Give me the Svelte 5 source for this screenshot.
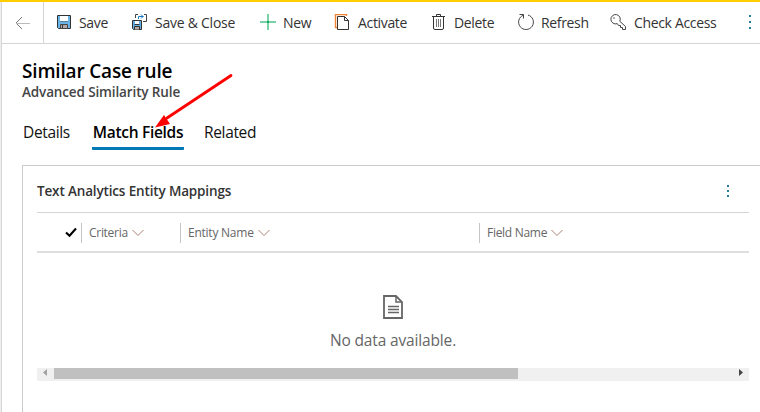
<script>
  const commands = [
    { id: 'save', label: 'Save' },
    { id: 'close', label: 'Save & Close' },
    { id: 'new', label: 'New' },
    { id: 'activate', label: 'Activate' },
    { id: 'delete', label: 'Delete' },
    { id: 'refresh', label: 'Refresh' },
    { id: 'access', label: 'Check Access' }
  ];
  const columns = [
    { id: 'criteria', label: 'Criteria' },
    { id: 'entity', label: 'Entity Name' },
    { id: 'field', label: 'Field Name' }
  ];
</script>

<div class="app">
  <header>
    <button class="back" aria-label="Back">
      <svg width="16" height="14" viewBox="0 0 16 14"><path d="M7 1 1 7l6 6" stroke="#777"/><path d="M1 7.5h14" stroke="#bbb"/></svg>
    </button>
    <nav>
      {#each commands as c}
        <button class="command {c.id}">
          <svg width="16" height="17" viewBox="0 0 16 17">
            {#if c.id === 'save'}
              <path d="M1.5 1.5h13v13h-12l-1-1z" fill="#69b5e8" stroke="#333"/>
              <path d="M4 2h8v5H4z" fill="#fff"/><path d="M4 7.5h8" stroke="#557f99"/><path d="M4.5 10.5h7v4h-7z" fill="#b6aaa6" stroke="#444"/><path d="M6.5 11v3" stroke="#333"/>
            {:else if c.id === 'close'}
              <path d="M.5 6.5h9v9h-8l-1-1z" fill="#62aee2" stroke="#333"/>
              <path d="M3 7h4v3H3z" fill="#fff"/><path d="M2.5 10.5h5M2.5 15.5v-3h5v3" fill="#b8aaa5" stroke="#333"/>
              <path d="M6 .5H3.5V4M12 .5h2.5v7H11" stroke="#444"/><path d="M6.5 5V2.5h5M9 .5l2 2-2 2" stroke="#167bc1"/>
            {:else if c.id === 'new'}
              <path d="M8 0v16M0 8h16" stroke="#77d2a6" stroke-width="2"/><path d="M7 7h2v2H7z" fill="#19a867"/>
            {:else if c.id === 'activate'}
              <path d="M3 13.5H1.5V.5h11V2" stroke="#f58334" stroke-width="1.4"/><path d="M3.5 2.5h7l4 4v9h-11z" fill="#fff" stroke="#333"/><path d="M10.5 2.5v4h4" stroke="#333"/>
            {:else if c.id === 'delete'}
              <path d="M1 2.5h13M5.5 2V.5h4V2M2.5 3v11q0 1.5 1.5 1.5h7q1.5 0 1.5-1.5V3" stroke="#333"/><path d="M5.5 5v8M7.5 5v8M9.5 5v8" stroke="#777"/>
            {:else if c.id === 'refresh'}
              <path d="M10 1A7.4 7.4 0 1 1 5.4 1.2M1.5.5h4v4" stroke="#444"/>
            {:else}
              <path d="M9.8 7.3l5.7 5.2v3h-3v-2h-2v-2h-2L7.3 9.6A4.7 4.7 0 1 1 9.8 7.3z" stroke="#444"/><circle cx="4" cy="4" r=".8" fill="#444"/>
            {/if}
          </svg>
          <span>{c.label}</span>
        </button>
      {/each}
    </nav>
    <svg class="more" width="4" height="16" viewBox="0 0 4 16"><path d="M1 1h2v2H1zM1 7h2v2H1zM1 13h2v2H1z" fill="#277c9d"/></svg>
  </header>

  <main>
    <h1>Similar Case rule</h1>
    <p class="subtitle">Advanced Similarity Rule</p>
    <div class="tabs">
      <button class="tab details"><span>Details</span></button>
      <button class="tab active"><span>Match Fields</span></button>
      <button class="tab"><span>Related</span></button>
    </div>
    <section>
      <div class="heading">
        <h2>Text Analytics Entity Mappings</h2>
        <svg width="4" height="14" viewBox="0 0 4 14"><path d="M1 1h2v2H1zM1 6h2v2H1zM1 11h2v2H1z" fill="#277c9d"/></svg>
      </div>
      <div class="columns">
        <div class="select"><svg width="12" height="11" viewBox="0 0 12 11"><path d="m1 5.5 3.5 3.3L11 1.5" stroke="#000" stroke-width="2.1"/></svg></div>
        {#each columns as col}
          <div class="column {col.id}">
            <span>{col.label}</span>
            <svg width="12" height="8" viewBox="0 0 12 8"><path d="m.5 1 5.5 5.5L11.5 1" stroke="#ac8275"/></svg>
          </div>
        {/each}
      </div>
      <div class="empty">
        <svg width="20" height="24" viewBox="0 0 20 24"><path d="M1 1h12l6 6v16H1z" stroke="#666" stroke-width="1.8"/><path d="M13 1v6h6M5 11.5h11M5 14.5h11M5 17.5h11" stroke="#666" stroke-width="1.5"/></svg>
        <p>No data available.</p>
      </div>
      <div class="scrollbar">
        <svg width="17" height="13" viewBox="0 0 17 13"><path d="M10 1v7L6 4.5z" fill="#a3a3a3"/></svg>
        <div class="thumb"></div>
        <svg width="17" height="13" viewBox="0 0 17 13"><path d="M7 1v7l4-3.5z" fill="#444"/></svg>
      </div>
    </section>
  </main>
  <svg class="pointer" width="84" height="60" viewBox="0 0 84 60"><path d="M79 3.5 15 46" stroke="#f00" stroke-width="2.8" stroke-linecap="round"/><path d="m3 55.5 9-12.5 6 9z" fill="#f00"/></svg>
</div>

<style>
  * { box-sizing: border-box; }
  .app { position: relative; width: 760px; height: 412px; overflow: hidden; background: #fff; border-top: 2px solid #ffce00; color: #333; font-family: "Open Sans", "Noto Sans", sans-serif; }
  .app::before { content: ""; position: absolute; left: 0; top: 0; width: 2px; height: 410px; background: linear-gradient(90deg, #efefef 50%, #d5d5d5 50%); }
  button { border: 0; margin: 0; padding: 0; background: transparent; font-family: inherit; color: inherit; }
  svg { display: block; fill: none; flex: none; }
  span, h1, h2, p { white-space: nowrap; }
  header { height: 42px; display: flex; align-items: center; border-bottom: 1px solid #d5d5d5; }
  .back { width: 44px; height: 41px; padding: 1px 0 0 15px; border-right: 1px solid #d5d5d5; }
  nav { width: 704px; display: flex; padding-left: 12px; }
  .command { display: flex; flex: none; align-items: center; gap: 7px; height: 41px; font-size: 14px; letter-spacing: -.34px; }
  .save { width: 76px; }
  .close { width: 128px; letter-spacing: -.25px; }
  .new { width: 74px; }
  .activate { width: 97px; gap: 8px; }
  .delete { width: 87px; }
  .refresh { width: 92px; }
  .access { gap: 8px; }
  .more { margin-top: -1px; }
  main { padding-left: 22px; }
  h1 { margin: 0; padding-top: 14px; font-size: 19px; line-height: 26px; font-weight: 600; color: #000; letter-spacing: -.18px; }
  .subtitle { margin: 0; font-size: 13.5px; line-height: 17px; font-weight: 600; color: #444; letter-spacing: -.13px; }
  .tabs { display: flex; height: 64px; padding-top: 19px; gap: 20px; }
  .tab { height: 30px; border-bottom: 3px solid transparent; font-size: 15.5px; line-height: 23px; color: #111; letter-spacing: -.34px; padding: 1px 0 3px; }
  .tab span { display: block; }
  .details { width: 50px; padding-left: 1px; text-align: left; }
  .tab.active { width: 92px; border-color: #0078b6; border-radius: 1px; font-weight: 600; letter-spacing: -.3px; font-size: 15.5px; color: #000; }
  section { height: 248px; border: 1px solid #ccc; border-right: 0; border-bottom: 0; padding: 0 11px 0 14px; }
  .heading { height: 47px; display: flex; align-items: center; justify-content: space-between; padding: 4px 19px 0 0; border-bottom: 1px solid #d5d5d5; }
  h2 { margin: 0; font-size: 13.5px; line-height: 18px; font-weight: 600; letter-spacing: -.15px; }
  .columns { display: flex; height: 40px; padding-top: 10px; border-bottom: 2px solid #e1dfdd; }
  .select { width: 44px; padding: 4px 0 0 28px; }
  .column { height: 20px; display: flex; align-items: center; gap: 4px; padding-left: 7px; border-left: 1px solid #c5c5c5; font-size: 12px; color: #666; letter-spacing: -.29px; }
  .column span { line-height: 16px; margin-top: -1px; }
  .criteria { width: 99px; }
  .entity { width: 299px; letter-spacing: -.24px; }
  .empty { height: 115px; display: flex; flex-direction: column; align-items: center; padding: 42px 1px 0 0; }
  .empty p { margin: 9px 0 0 1px; font-size: 15.5px; line-height: 24px; color: #666; letter-spacing: -.15px; }
  .scrollbar { height: 13px; display: flex; background: #f0f0f0; }
  .thumb { width: 464px; height: 11px; margin-right: auto; background: #c0c0c0; }
  .pointer { position: absolute; left: 152px; top: 70px; }
</style>
